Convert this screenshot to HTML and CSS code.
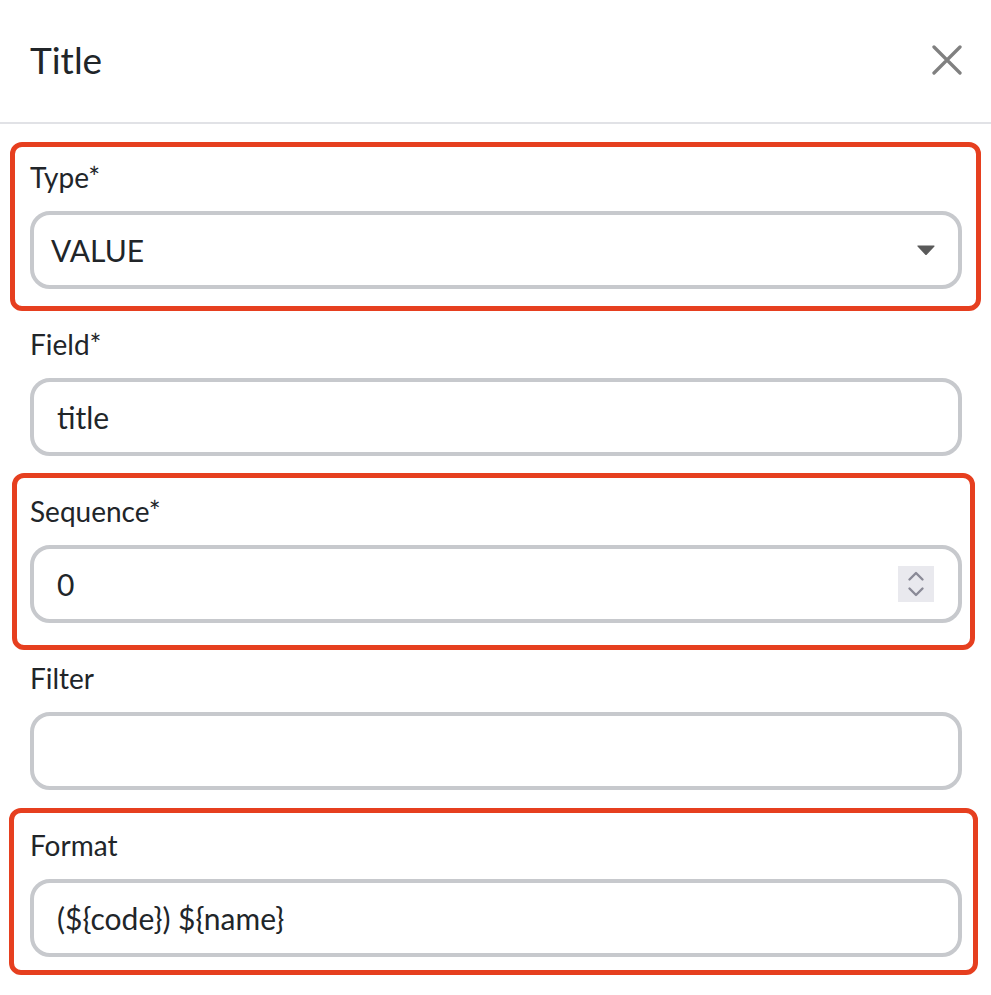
FILE: index.html
```html
<!DOCTYPE html>
<html lang="en">
<head>
<meta charset="utf-8">
<title>Title</title>
<link rel="stylesheet" href="styles.css">
</head>
<body>
<div class="panel">
  <header class="header">
    <h1 class="title">Title</h1>
    <button class="close" aria-label="Close">
      <svg width="30" height="30" viewBox="0 0 30 30"><path d="M2 2 L28 28 M28 2 L2 28" stroke="#808080" stroke-width="3.3" stroke-linecap="round" fill="none"/></svg>
    </button>
  </header>
  <div class="form">
    <div class="field">
      <div class="label">Type*</div>
      <div class="control select"><span class="value">VALUE</span>
        <svg class="caret" width="18" height="10" viewBox="0 0 18 10"><path d="M1 1 L17 1 L9 9.5 Z" fill="#5a5a5a" stroke="#5a5a5a" stroke-width="1.2" stroke-linejoin="round"/></svg>
      </div>
      <div class="mark mark-type"></div>
    </div>
    <div class="field">
      <div class="label">Field*</div>
      <div class="control"><span class="value">title</span></div>
    </div>
    <div class="field">
      <div class="label">Sequence*</div>
      <div class="control number"><span class="value">0</span>
        <span class="spinner">
          <svg width="36" height="36" viewBox="0 0 36 36"><path d="M11.5 13.5 L18 7 L24.5 13.5 M11.5 22.5 L18 29 L24.5 22.5" stroke="#8a8a97" stroke-width="2.4" stroke-linecap="round" stroke-linejoin="round" fill="none"/></svg>
        </span>
      </div>
      <div class="mark mark-seq"></div>
    </div>
    <div class="field">
      <div class="label">Filter</div>
      <div class="control"><span class="value"></span></div>
    </div>
    <div class="field">
      <div class="label">Format</div>
      <div class="control"><span class="value">(${code}) ${name}</span></div>
      <div class="mark mark-format"></div>
    </div>
  </div>
</div>
</body>
</html>
```
FILE: styles.css
```css
html, body {
  margin: 0;
  padding: 0;
  background: #ffffff;
}
body {
  font-family: "Lato", "Liberation Sans", sans-serif;
  color: #212529;
}
.panel {
  width: 991px;
}
.header {
  height: 124px;
  box-sizing: border-box;
  border-bottom: 2px solid #e1e2e6;
  display: flex;
  align-items: center;
  justify-content: space-between;
  padding: 0 29px 3px 30px;
}
.title {
  margin: 0;
  font-size: 37px;
  line-height: 44px;
  font-weight: 400;
  color: #212529;
}
.close {
  border: 0;
  background: none;
  padding: 0;
  width: 30px;
  height: 30px;
  display: flex;
}
.form {
  display: flex;
  flex-direction: column;
  gap: 35px;
  padding: 33px 29px 38px 30px;
}
.field {
  position: relative;
}
.label {
  font-size: 28px;
  line-height: 40px;
  margin-bottom: 14px;
  color: #212529;
}
.control {
  height: 78px;
  box-sizing: border-box;
  border: 4px solid #c7c9cd;
  border-radius: 20px;
  display: flex;
  align-items: center;
  justify-content: space-between;
  padding: 0 24px 0 23px;
  font-size: 30px;
  color: #212529;
}
.select {
  padding: 0 23px 0 17px;
}
.caret {
  display: block;
}
.number {
  padding-right: 24px;
}
.spinner {
  width: 36px;
  height: 36px;
  background: #e9e9ee;
  display: flex;
}
.mark {
  position: absolute;
  border: 5px solid #e63f1f;
  border-radius: 12px;
  pointer-events: none;
}
.mark-type {
  top: -15px;
  left: -20px;
  right: -19px;
  bottom: -22px;
}
.mark-seq {
  top: -18px;
  left: -18px;
  right: -13px;
  bottom: -27px;
}
.mark-format {
  top: -17px;
  left: -21px;
  right: -16px;
  bottom: -18px;
}
```
